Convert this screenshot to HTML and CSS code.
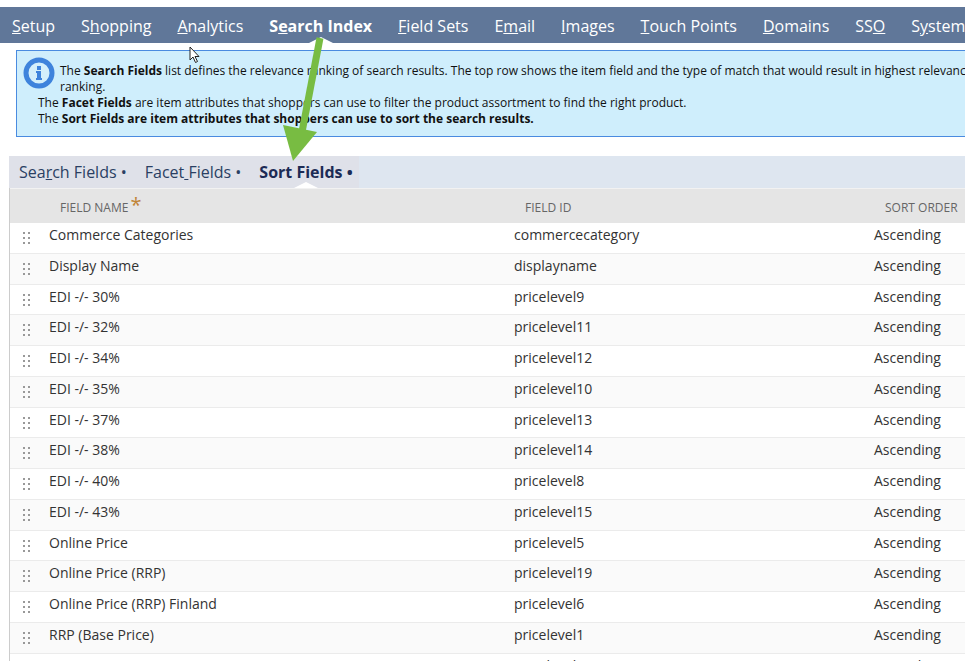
FILE: index.html
```html
<!DOCTYPE html>
<html lang="en">
<head>
  <meta charset="UTF-8">
  <title>Web Site Setup - Search Index</title>
  <link rel="stylesheet" href="styles.css">
</head>
<body>

<nav class="main_tabs">
  <a href="#setup"><u>S</u>etup</a>
  <a href="#shopping">S<u>h</u>opping</a>
  <a href="#analytics"><u>A</u>nalytics</a>
  <a href="#search" class="active">S<u>e</u>arch Index</a>
  <a href="#fieldsets"><u>F</u>ield Sets</a>
  <a href="#email">E<u>m</u>ail</a>
  <a href="#images"><u>I</u>mages</a>
  <a href="#touch"><u>T</u>ouch Points</a>
  <a href="#domains"><u>D</u>omains</a>
  <a href="#sso">SS<u>O</u></a>
  <a href="#system">S<u>y</u>stem</a>
</nav>

<div class="info_box">
  <svg class="info_icon" viewBox="0 0 32 32" width="32" height="32" aria-hidden="true">
    <circle cx="16" cy="16" r="13" fill="#d4effb" stroke="#3e83dc" stroke-width="5"/>
    <rect x="14" y="9" width="4" height="4" fill="#3e83dc"/>
    <path d="M13 14h5v7h1v2h-6v-2h1v-5h-1z" fill="#3e83dc"/>
  </svg>
  <p>The <b>Search Fields</b> list defines the relevance ranking of search results. The top row shows the item field and the type of match that would result in highest relevance ra<br>ranking.</p>
  <p>The <b>Facet Fields</b> are item attributes that shoppers can use to filter the product assortment to find the right product.</p>
  <p>The <b>Sort Fields are item attributes that shoppers can use to sort the search results.</b></p>
</div>

<div class="sublist">
  <nav class="sub_tabs">
    <div class="sub_tabs_list">
      <a href="#searchfields">Sea<u>r</u>ch Fields •</a>
      <a href="#facetfields">Facet<u> </u>Fields •</a>
      <a href="#sortfields" class="active">Sort Fields •</a>
    </div>
  </nav>

  <table>
    <thead>
      <tr>
        <th class="grip_col"></th>
        <th class="name_col">Field Name<span class="required">*</span></th>
        <th class="id_col">Field ID</th>
        <th>Sort Order</th>
      </tr>
    </thead>
    <tbody id="rows"></tbody>
  </table>
</div>

<!-- mouse pointer -->
<svg class="pointer" viewBox="0 0 12 18" width="12" height="18" aria-hidden="true">
  <path d="M1 1v13l3-3 2.5 5.5 2-1L6 10.5h4z" fill="#fff" stroke="#222" stroke-width="1"/>
</svg>

<!-- arrow from the main tab to the sub tab -->
<svg class="arrow" viewBox="0 0 44 126" width="44" height="126" aria-hidden="true">
  <path d="M38 1L20 95" stroke="#78bc42" stroke-width="7" fill="none"/>
  <path d="M1 88L35 95L11 124z" fill="#78bc42"/>
</svg>

<script>
const fields = [
  ["Commerce Categories", "commercecategory"],
  ["Display Name", "displayname"],
  ["EDI -/- 30%", "pricelevel9"],
  ["EDI -/- 32%", "pricelevel11"],
  ["EDI -/- 34%", "pricelevel12"],
  ["EDI -/- 35%", "pricelevel10"],
  ["EDI -/- 37%", "pricelevel13"],
  ["EDI -/- 38%", "pricelevel14"],
  ["EDI -/- 40%", "pricelevel8"],
  ["EDI -/- 43%", "pricelevel15"],
  ["Online Price", "pricelevel5"],
  ["Online Price (RRP)", "pricelevel19"],
  ["Online Price (RRP) Finland", "pricelevel6"],
  ["RRP (Base Price)", "pricelevel1"],
  ["RRP (Base Price) (DE)", "pricelevel7"]
];

const grip = '<svg class="grip" viewBox="0 0 8 12" width="8" height="12" fill="#999">' +
  '<path d="M0 0h2v2H0zM5 0h2v2H5zM0 5h2v2H0zM5 5h2v2H5zM0 10h2v2H0zM5 10h2v2H5z"/></svg>';

const tbody = document.getElementById("rows");
fields.forEach(([name, id]) => {
  const row = tbody.insertRow();
  row.insertCell().innerHTML = grip;
  row.insertCell().textContent = name;
  row.insertCell().textContent = id;
  row.insertCell().textContent = "Ascending";
});
</script>

</body>
</html>
```
FILE: styles.css
```css
body {
  margin: 0;
  padding-top: 7px;
  height: 100vh;
  box-sizing: border-box;
  overflow: hidden;
  background: #fff;
  font-family: "Open Sans", sans-serif;
  color: #333;
}
a {
  text-decoration: none;
}
.main_tabs {
  display: flex;
  gap: 26px;
  height: 36px;
  padding-left: 12px;
  background: #607799;
  font-size: 16px;
  line-height: 38px;
  white-space: nowrap;
}
.main_tabs a {
  color: #fff;
}
.active {
  position: relative;
  font-weight: bold;
}
.active::after {
  content: "";
  position: absolute;
  left: 50%;
  bottom: 0;
  margin-left: -12px;
  border: 12px solid transparent;
  border-top: 0;
  border-bottom: 6px solid #fff;
}
.info_box {
  margin: 7px 0 0 16px;
  padding: 12px 0 9px 21px;
  border: 1px solid #4a8be0;
  border-right: 0;
  background: #cfeefc;
  color: #111;
  font-size: 12px;
  line-height: 16px;
  white-space: nowrap;
}
.info_box p {
  margin: 0;
}
.info_icon {
  float: left;
  margin: -6px 5px 0 -15px;
}
.sublist {
  margin: 19px 0 0 9px;
}
.sub_tabs {
  display: flex;
  background: #dee6f0;
}
.sub_tabs_list {
  display: flex;
  gap: 18px;
  padding: 0 6px 0 10px;
  background: #dfe1e9;
  font-size: 16px;
  line-height: 32px;
}
.sub_tabs_list a {
  color: #2a3f63;
}
.sub_tabs_list .active {
  color: #1c2b55;
}
table {
  width: 100%;
  table-layout: fixed;
  border-collapse: separate;
  border-spacing: 0;
  border-left: 1px solid #ccc;
}
th {
  height: 35px;
  padding: 2px 0 0 11px;
  box-sizing: border-box;
  border-top: 1px solid #f2f2f2;
  background: #e5e5e5;
  color: #666;
  font-size: 12px;
  font-weight: normal;
  text-align: left;
  text-transform: uppercase;
  white-space: nowrap;
}
.grip_col {
  width: 39px;
  padding: 0;
}
.name_col {
  width: 465px;
}
.id_col {
  width: 360px;
}
.required {
  margin-left: 2px;
  color: #c08437;
  font-size: 20px;
  line-height: 12px;
}
td {
  height: 31px;
  padding: 1px 0 0;
  box-sizing: border-box;
  border-bottom: 1px solid #ebebeb;
  font-size: 14px;
  line-height: 22px;
  vertical-align: top;
}
tbody tr:nth-child(4n+3) td {
  height: 30px;
}
tbody tr:nth-child(even) {
  background: #fafafa;
}
.grip {
  display: block;
  margin: 8px 0 0 13px;
}
.pointer {
  position: absolute;
  left: 189px;
  top: 46px;
}
.arrow {
  position: absolute;
  left: 282px;
  top: 37px;
}
```
